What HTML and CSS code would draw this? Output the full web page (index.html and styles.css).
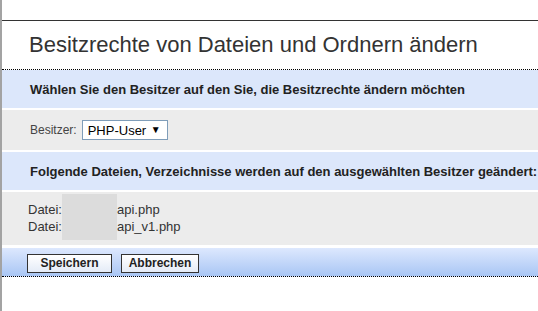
FILE: index.html
```html
<!DOCTYPE html>
<html lang="de">

<head>
  <meta charset="utf-8">
  <title>Besitzrechte ändern</title>
  <link rel="stylesheet" href="styles.css">
</head>

<body>
  <div class="seite">
    <div class="panel">
      <h1 class="titel">Besitzrechte von Dateien und Ordnern ändern</h1>
      <div class="zeile blau">Wählen Sie den Besitzer auf den Sie, die Besitzrechte ändern möchten</div>
      <div class="zeile grau auswahl">
        <label for="besitzer">Besitzer:</label>
        <span class="auswahlbox">
          <select id="besitzer" name="besitzer">
            <option>PHP-User</option>
          </select>
        </span>
      </div>
      <div class="zeile blau">Folgende Dateien, Verzeichnisse werden auf den ausgewählten Besitzer geändert:</div>
      <div class="zeile grau dateien">
        <span class="label">Datei:</span>
        <span class="verdeckt"></span>
        <span class="name">api.php</span>
        <span class="label">Datei:</span>
        <span class="name">api_v1.php</span>
      </div>
      <div class="knoepfe">
        <button class="speichern">Speichern</button>
        <button class="abbrechen">Abbrechen</button>
      </div>
    </div>
  </div>
</body>

</html>
```

FILE: styles.css
```css
html,
body {
  margin: 0;
  background-color: #fff;
}

body {
  font-family: "Liberation Sans", Arial, sans-serif;
  color: #333;
}

.seite {
  border-left: 2px solid #a3a3a3;
  min-height: 311px;
  box-sizing: border-box;
  padding-top: 20px;
}

.panel {
  border-top: 1px solid #333;
}

.titel {
  margin: 0;
  height: 48px;
  line-height: 48px;
  padding-left: 27px;
  font-size: 22px;
  font-weight: normal;
  color: #333;
  border-bottom: 1px dotted #000;
}

.zeile {
  padding-left: 28px;
  font-size: 13px;
}

.blau {
  background-color: #dce7fb;
  height: 38px;
  line-height: 40px;
  font-weight: bold;
  color: #222;
}

.blau+.grau,
.grau+.blau {
  margin-top: 2px;
}

.grau {
  background-color: #ececec;
}

.auswahl {
  height: 40px;
  display: flex;
  align-items: center;
  gap: 5px;
  font-size: 12px;
  color: #444;
}

.auswahlbox {
  position: relative;
  display: inline-block;
}

.auswahlbox select {
  appearance: none;
  -webkit-appearance: none;
  display: block;
  width: 86px;
  height: 20px;
  box-sizing: border-box;
  border: 1px solid #7f9db9;
  border-radius: 0;
  background: #fff;
  padding: 0 0 0 5px;
  font-family: "Liberation Sans", Arial, sans-serif;
  font-size: 13px;
  color: #000;
}

.auswahlbox::after {
  content: "▼";
  position: absolute;
  right: 7px;
  top: 4px;
  font-size: 10px;
  line-height: 12px;
  color: #000;
  pointer-events: none;
}

.dateien {
  margin-top: 3px;
  height: 53px;
  box-sizing: border-box;
  padding-top: 9px;
  padding-left: 26px;
  display: grid;
  grid-template-columns: auto 55px auto;
  grid-template-rows: 17px 17px;
  justify-content: start;
  align-content: start;
  line-height: 17px;
}

.dateien .label {
  grid-column: 1;
}

.dateien .name {
  grid-column: 3;
}

.verdeckt {
  grid-column: 2;
  grid-row: 1 / 3;
  margin: -7px 0 -5px;
  background-color: #dcdcdc;
}

.knoepfe {
  margin-top: 3px;
  height: 29px;
  box-sizing: border-box;
  padding: 6px 0 0 25px;
  display: flex;
  gap: 9px;
  align-items: flex-start;
  background: linear-gradient(#dde8fe, #a9c6f4);
  border-bottom: 1px dotted #000;
}

.knoepfe button {
  height: 19px;
  padding: 0;
  border: 1px solid #333;
  border-radius: 0;
  background: linear-gradient(#ffffff, #e4ebf7);
  font-family: "Liberation Sans", Arial, sans-serif;
  font-size: 12px;
  font-weight: bold;
  color: #222;
  line-height: 17px;
}

.speichern {
  width: 85px;
}

.abbrechen {
  width: 78px;
}
```
